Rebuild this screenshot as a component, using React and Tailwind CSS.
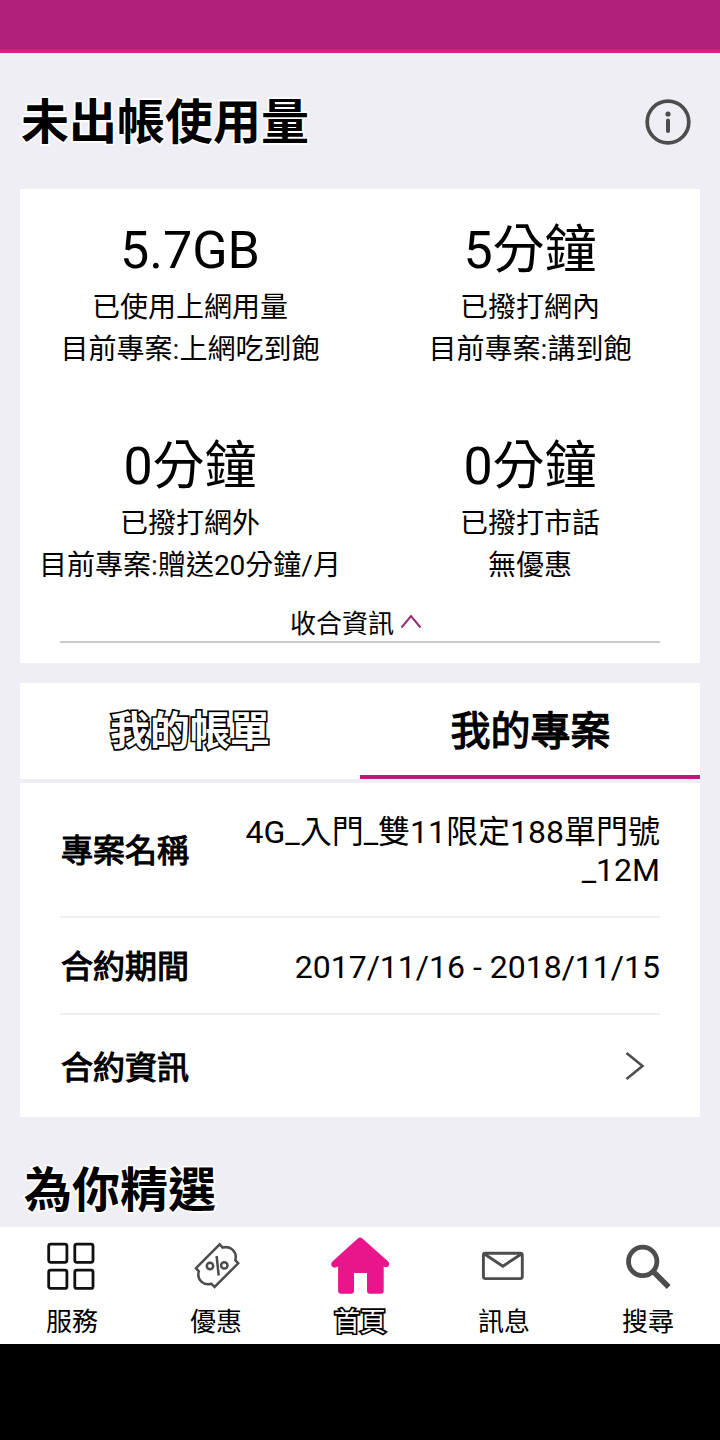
const usage = [
  { value: "5.7GB", label: "已使用上網用量", plan: "目前專案:上網吃到飽" },
  { value: "5分鐘", label: "已撥打網內", plan: "目前專案:講到飽" },
  { value: "0分鐘", label: "已撥打網外", plan: "目前專案:贈送20分鐘/月" },
  { value: "0分鐘", label: "已撥打市話", plan: "無優惠" },
];

// black text with a white halo, for headings on the grey background
const haloText = "font-bold [paint-order:stroke_fill] [-webkit-text-stroke:3.4px_white]";

function GridIcon() {
  return (
    <svg width="60" height="60" viewBox="0 0 60 60" fill="none" stroke="#111" strokeWidth="2.8">
      <rect x="6.7" y="7.1" width="18.2" height="18.2" rx="2" />
      <rect x="32.8" y="7.1" width="18.2" height="18.2" rx="2" />
      <rect x="6.7" y="33.2" width="18.2" height="18.2" rx="2" />
      <rect x="32.8" y="33.2" width="18.2" height="18.2" rx="2" />
    </svg>
  );
}

function CouponIcon() {
  return (
    <svg width="60" height="60" viewBox="0 0 60 60" fill="none" stroke="#4d4d4d" strokeWidth="2.5">
      <path d="M10 31.2 L33.7 7.4 L36.6 10.6 C44.5 8.5 51.5 14.5 49.3 23.2 L52.2 26.3 L28.6 50 L25.6 46.8 C17.5 49 10.5 43 12.8 34.3 Z" />
      <circle cx="24" cy="29" r="3.2" />
      <circle cx="38.3" cy="28.4" r="3.2" />
      <path d="M30.6 19 L32.7 38.5" />
    </svg>
  );
}

function HomeIcon() {
  return (
    <svg width="60" height="60" viewBox="0 0 60 60" fill="#ea158c">
      <path d="M27.8 1.4 Q30.1 -0.4 32.4 1.4 L58.2 24.6 Q60.2 27 58.4 29.3 Q56.5 31 53.7 29.6 V53.8 Q53.7 56.8 50.7 56.8 H39.9 Q37 56.8 37 53.8 V36 H24 V53.8 Q24 56.8 21 56.8 H11 Q8.1 56.8 8.1 53.8 V29.6 Q4 31.8 2 29.6 Q0.2 27 2.4 24.6 Z" />
    </svg>
  );
}

function MailIcon() {
  return (
    <svg width="60" height="60" viewBox="0 0 60 60" fill="none" stroke="#4d4d4d" strokeWidth="2.9" strokeLinejoin="round">
      <rect x="9.4" y="16.2" width="38.9" height="25.4" rx="2" />
      <path d="M10 16.8 L28.9 29.2 L47.8 16.8" strokeLinejoin="miter" />
    </svg>
  );
}

function SearchIcon() {
  return (
    <svg width="60" height="60" viewBox="0 0 60 60" fill="none" stroke="#4d4d4d">
      <circle cx="24.7" cy="24.4" r="14.2" strokeWidth="4.8" />
      <path d="M35.5 34.8 L50.7 50" strokeWidth="5.5" />
    </svg>
  );
}

const navItems = [
  { label: "服務", Icon: GridIcon },
  { label: "優惠", Icon: CouponIcon },
  { label: "首頁", Icon: HomeIcon, active: true },
  { label: "訊息", Icon: MailIcon },
  { label: "搜尋", Icon: SearchIcon },
];

function UsageCard() {
  return (
    <section className="mx-5 h-[474px] bg-white pt-8">
      <div className="grid grid-cols-2">
        {usage.map((item) => (
          <div key={item.label} className="flex h-[216px] flex-col items-center whitespace-nowrap">
            <div className="text-[52px] leading-[60px]">{item.value}</div>
            <div className="mt-1.5 text-[28px] leading-[42px]">{item.label}</div>
            <div className="text-[28px] leading-[42px]">{item.plan}</div>
          </div>
        ))}
      </div>
      <button className="mx-10 -mt-[50px] flex h-[40px] w-[600px] items-center justify-center border-b-2 border-[#cbcbcb] pr-2 text-[26px] leading-[38px]">
        <span className="pt-1">收合資訊</span>
        <svg className="ml-1.5" width="22" height="38" viewBox="0 0 22 38" fill="none" stroke="#942f75" strokeWidth="2">
          <path d="M1.5 24.5 L11 13 L20.5 24.5" />
        </svg>
      </button>
    </section>
  );
}

function PlanCard() {
  return (
    <section className="mx-5 mt-5">
      <div className="grid h-24 grid-cols-2 bg-white text-center text-[40px] leading-[98px]">
        <div className="h-24 font-bold text-white [paint-order:stroke_fill] [-webkit-text-stroke:3.4px_black]">
          我的帳單
        </div>
        <div className="h-24 border-b-4 border-[#b01f7a] pl-px [-webkit-text-stroke:1.3px_black]">我的專案</div>
      </div>
      <div className="mt-1 h-[334px] bg-white px-10 text-[32px]">
        <div className="flex h-[135px] items-center justify-between border-b-2 border-[#eeeef3]">
          <span className="pt-0.5 pl-px leading-[38px] [-webkit-text-stroke:1.1px_black]">專案名稱</span>
          <span className="pt-0.5 text-right leading-[38px]">
            4G_入門_雙11限定188單門號
            <br />
            _12M
          </span>
        </div>
        <div className="flex h-[97px] items-center justify-between border-b-2 border-[#eeeef3]">
          <span className="pt-0.5 pl-px [-webkit-text-stroke:1.1px_black]">合約期間</span>
          <span className="pt-0.5">2017/11/16 - 2018/11/15</span>
        </div>
        <div className="flex h-[102px] items-center justify-between pr-3.5">
          <span className="pt-[3px] pl-px [-webkit-text-stroke:1.1px_black]">合約資訊</span>
          <svg width="22" height="30" viewBox="0 0 22 30" fill="none" stroke="#4d4d4d" strokeWidth="2.6">
            <path d="M2.5 2 L18.5 15 L2.5 28" />
          </svg>
        </div>
      </div>
    </section>
  );
}

function BottomNav() {
  return (
    <nav className="grid h-[117px] grid-cols-5 bg-white">
      {navItems.map(({ label, Icon, active }) => (
        <div key={label} className="flex flex-col items-center pt-[10px]">
          <Icon />
          <span
            className={
              active
                ? "mt-1.5 text-[26px] leading-[38px] text-white [paint-order:stroke_fill] [-webkit-text-stroke:3.4px_black]"
                : "mt-1.5 text-[26px] leading-[38px]"
            }
          >
            {label}
          </span>
        </div>
      ))}
    </nav>
  );
}

export default function App() {
  return (
    <div className="flex h-[1440px] w-[720px] flex-col overflow-hidden bg-[#efeef4] font-[Roboto,'Noto_Sans_CJK_TC',sans-serif] text-black">
      <div className="h-[52.5px] shrink-0 border-b-4 border-[#d81b84] bg-[#b01f7a]" />
      <header className="flex h-[136.5px] shrink-0 items-center justify-between pr-7 pl-[21px]">
        <h1 className={`pt-1 text-[48px] leading-[56px] ${haloText}`}>未出帳使用量</h1>
        <svg width="48" height="48" viewBox="0 0 48 48" fill="none" stroke="#4d4d4d">
          <circle cx="24" cy="25" r="20.8" strokeWidth="3.7" />
          <circle cx="24" cy="17" r="2.6" fill="#4d4d4d" stroke="none" />
          <path d="M24 23.5 V34" strokeWidth="4" strokeLinecap="round" />
        </svg>
      </header>
      <UsageCard />
      <PlanCard />
      <h2 className={`h-[110px] shrink-0 pt-[46px] pl-6 text-[48px] leading-[56px] ${haloText}`}>為你精選</h2>
      <BottomNav />
      <div className="flex-1 bg-black" />
    </div>
  );
}
